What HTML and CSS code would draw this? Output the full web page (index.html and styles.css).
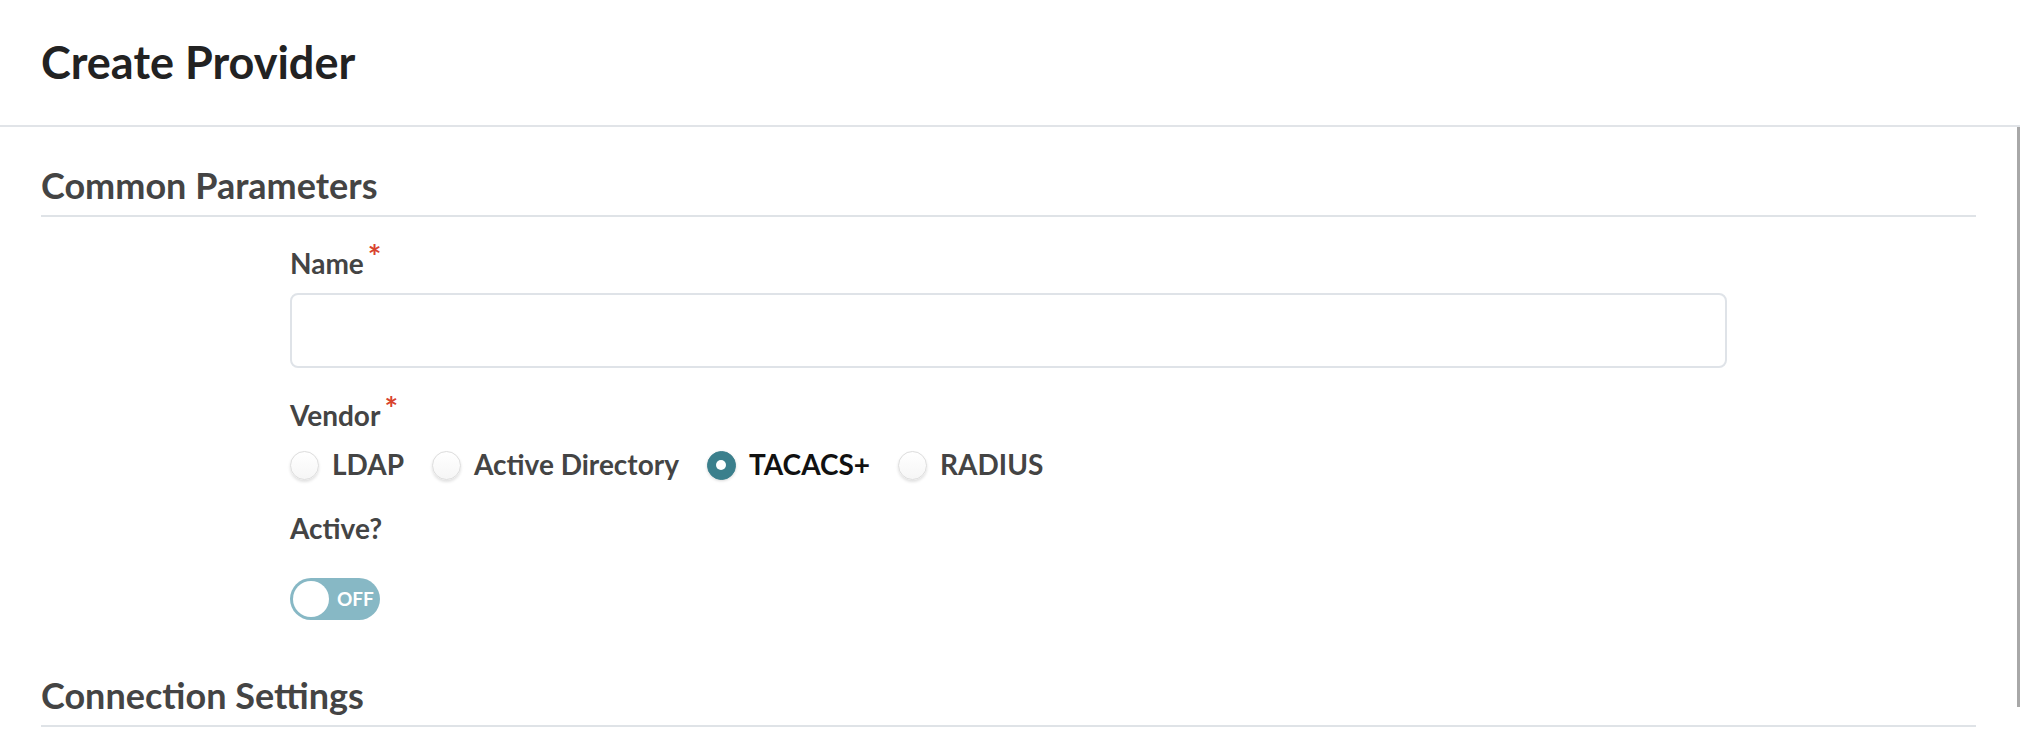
FILE: index.html
```html
<!DOCTYPE html>
<html lang="en">
<head>
<meta charset="utf-8">
<title>Create Provider</title>
<link rel="stylesheet" href="styles.css">
</head>
<body>
<div class="page">
  <header class="page-header">
    <h1 class="page-title">Create Provider</h1>
  </header>
  <main class="content">
    <section class="section">
      <h2 class="section-title">Common Parameters</h2>
      <div class="fields">
        <div class="field">
          <label class="field-label">Name<span class="req">*</span></label>
          <input class="text-input" type="text">
        </div>
        <div class="field field-vendor">
          <label class="field-label">Vendor<span class="req">*</span></label>
          <div class="radio-group">
            <label class="radio"><span class="radio-dot"></span><span class="radio-text">LDAP</span></label>
            <label class="radio"><span class="radio-dot"></span><span class="radio-text">Active Directory</span></label>
            <label class="radio is-checked"><span class="radio-dot"></span><span class="radio-text">TACACS+</span></label>
            <label class="radio"><span class="radio-dot"></span><span class="radio-text">RADIUS</span></label>
          </div>
        </div>
        <div class="field field-active">
          <label class="field-label">Active?</label>
          <div class="toggle"><span class="toggle-knob"></span><span class="toggle-text">OFF</span></div>
        </div>
      </div>
    </section>
    <section class="section section-conn">
      <h2 class="section-title">Connection Settings</h2>
    </section>
    <div class="scroll-thumb"></div>
  </main>
</div>
</body>
</html>
```

FILE: styles.css
```css
* { box-sizing: border-box; }
html, body { margin: 0; padding: 0; background: #ffffff; }
body {
  font-family: Lato, "Noto Sans", sans-serif;
  color: #444444;
  width: 2020px;
  height: 738px;
  overflow: hidden;
}
.page { display: flex; flex-direction: column; }
.page-header {
  height: 127px;
  padding: 35px 0 0 41px;
  border-bottom: 2px solid #e1e4e8;
}
.page-title {
  margin: 0;
  font-size: 45px;
  line-height: 1.2;
  font-weight: 700;
  color: #222222;
}
.content {
  position: relative;
  padding: 0 44px 0 41px;
}
.section-title {
  margin: 0;
  font-size: 36px;
  line-height: 1.2;
  font-weight: 700;
  color: #444444;
  padding-bottom: 8px;
  border-bottom: 2px solid #dfe3e7;
}
.section { padding-top: 37px; }
.section-conn { padding-top: 54px; }
.fields {
  padding: 30px 0 0 249px;
  display: flex;
  flex-direction: column;
}
.field { display: flex; flex-direction: column; }
.field-label {
  font-size: 28px;
  line-height: 1.2;
  font-weight: 700;
  color: #444444;
}
.req {
  color: #d8432e;
  font-size: 32px;
  font-weight: 700;
  line-height: 1;
  vertical-align: top;
  margin-left: 4px;
  position: relative;
  top: -6px;
}
.text-input {
  margin-top: 12px;
  width: 1437px;
  height: 75px;
  border: 2px solid #dfe3e8;
  border-radius: 8px;
  background: #ffffff;
  outline: none;
}
.field-vendor { margin-top: 31px; }
.radio-group {
  margin-top: 16px;
  display: flex;
  gap: 28px;
  align-items: center;
}
.radio { display: flex; align-items: center; gap: 13px; }
.radio-dot {
  width: 29px;
  height: 29px;
  border-radius: 50%;
  border: 1px solid #dcdcdc;
  background: linear-gradient(#ffffff, #f6f6f6);
  box-shadow: 0 2px 3px rgba(0,0,0,0.12);
  display: flex;
  align-items: center;
  justify-content: center;
}
.radio-text {
  font-size: 28px;
  line-height: 1.2;
  font-weight: 700;
  color: #444444;
}
.is-checked .radio-dot {
  background: #3b7f8c;
  border-color: #3b7f8c;
  box-shadow: 0 1px 3px rgba(0,0,0,0.15);
}
.is-checked .radio-dot::after {
  content: "";
  width: 10px;
  height: 10px;
  border-radius: 50%;
  background: #ffffff;
}
.is-checked .radio-text { color: #111111; }
.field-active { margin-top: 30px; }
.toggle {
  margin-top: 32px;
  width: 90px;
  height: 42px;
  border-radius: 21px;
  background: #87b8c5;
  display: flex;
  align-items: center;
  padding: 0 3px;
  gap: 8px;
}
.toggle-knob {
  width: 36px;
  height: 36px;
  border-radius: 50%;
  background: #ffffff;
  flex: none;
}
.toggle-text {
  color: #ffffff;
  font-size: 19px;
  font-weight: 700;
  line-height: 1;
}
.scroll-thumb {
  position: absolute;
  right: 0;
  top: 0;
  width: 3px;
  height: 580px;
  background: #a8a8a8;
}
```
